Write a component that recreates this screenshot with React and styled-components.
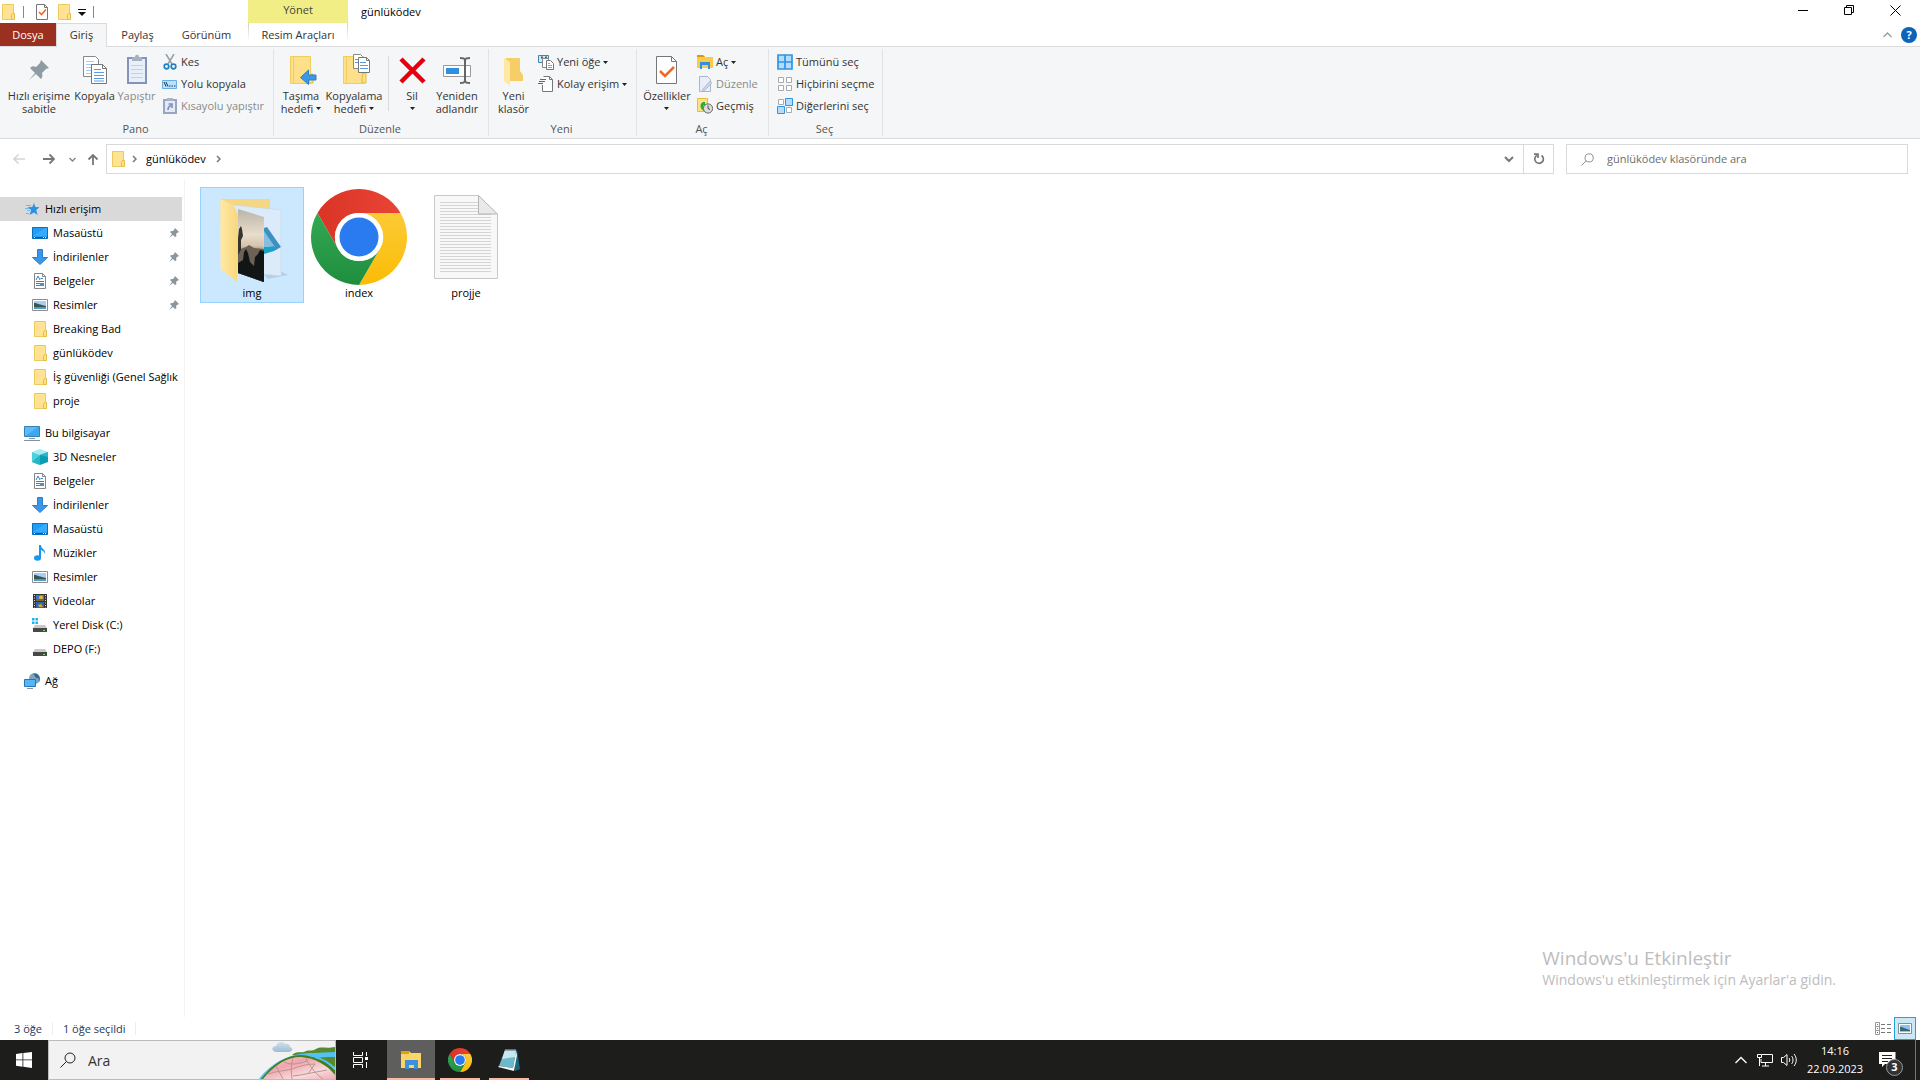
import React from "react";
import styled, { createGlobalStyle, css } from "styled-components";

const quickAccess = [
	{ label: "Masaüstü", icon: "desktop", pinned: true },
	{ label: "İndirilenler", icon: "download", pinned: true },
	{ label: "Belgeler", icon: "document", pinned: true },
	{ label: "Resimler", icon: "picture", pinned: true },
	{ label: "Breaking Bad", icon: "folder" },
	{ label: "günlüködev", icon: "folder" },
	{ label: "İş güvenliği (Genel Sağlık", icon: "folder" },
	{ label: "proje", icon: "folder" },
];

const thisComputer = [
	{ label: "3D Nesneler", icon: "cube" },
	{ label: "Belgeler", icon: "document" },
	{ label: "İndirilenler", icon: "download" },
	{ label: "Masaüstü", icon: "desktop" },
	{ label: "Müzikler", icon: "music" },
	{ label: "Resimler", icon: "picture" },
	{ label: "Videolar", icon: "video" },
	{ label: "Yerel Disk (C:)", icon: "systemDisk" },
	{ label: "DEPO (F:)", icon: "disk" },
];

const smallIcons = {
	folder: (
		<>
			<path d="M2.500.5h11v15h-11z" fill="#ffe292" stroke="#ecc95c" />
			<path d="M12.500 9.500h2v6h-3v-4z" fill="#ffe292" stroke="#e5bd45" />
		</>
	),
	desktop: (
		<>
			<path d="M.5 2.500h15v11H.5z" fill="#1e9dfb" stroke="#0f6db5" />
			<path d="M1 11 13 3h2v8z" fill="#39abfd" />
			<path d="M1 12.500h14" stroke="#0b5c9c" />
			<path d="M2 12.500h1M11 12.500h1M13 12.500h1" stroke="#fff" />
		</>
	),
	download: <path d="M5.500.5h5v8h5L8 15.500.5 8.500h5z" fill="#3a96e8" stroke="#2b7fcb" />,
	document: (
		<>
			<path d="M2.500.5h8l3 3v12h-11z" fill="#fff" stroke="#858585" />
			<path d="M10.500.5v3h3" fill="none" stroke="#858585" />
			<path d="m4 7 2-4 2 4M8.500 5.500H11M4 8.500h8M4 10.500h4M4 12.500h4" fill="none" stroke="#3a7fb8" />
			<path d="M8 10h4v3H8z" fill="#4f91c6" />
		</>
	),
	picture: (
		<>
			<path d="M.5 2.500h15v11H.5z" fill="#fff" stroke="#8c8c8c" />
			<path d="M2 4h12v8H2z" fill="#a6cdf2" />
			<path d="M2 6c3 0 6 2 12 3v1H2z" fill="#33584f" />
			<path d="M2 10h12v2H2z" fill="#5b94cd" />
		</>
	),
	star: (
		<>
			<path d="m10 2 1.300 4 4.200.300-3.300 2.700 1.400 5L10 11.400 5.500 14l1.700-5L3.500 6.300l4.800-.3z" fill="#2a90e2" />
			<path d="M2 4.500h5M1 7.500h4M3 9.500h3M2 12.500h3" stroke="#6dbaf0" />
		</>
	),
	computer: (
		<>
			<path d="M.5 1.500h15v10H.5z" fill="#5dbcf8" stroke="#347fb3" />
			<path d="M1 11 14 2h1v9z" fill="#3ea7f0" />
			<path d="M5 13.500h6M0 15.500h16" stroke="#8295a5" />
		</>
	),
	cube: (
		<>
			<path d="m8 0 8 3-8 3-8-3z" fill="#a5edf2" />
			<path d="m0 3 8 3v10l-8-3z" fill="#4ed1dc" />
			<path d="m16 3-8 3v10l8-3z" fill="#0b9eb3" />
			<path d="m8 6 8-3v5z" fill="#28b8ca" />
			<path d="m0 13 8-7v10z" fill="#25b5c5" />
		</>
	),
	music: (
		<>
			<path d="M7 0h2c0 4 5 4 4 9-1-3-2-3-4-4v8H7z" fill="#1897ef" />
			<ellipse cx="5.500" cy="13" rx="3.500" ry="2.700" fill="#1897ef" />
		</>
	),
	video: (
		<>
			<path d="M1 1h14v14H1z" fill="#343434" />
			<path d="M4 2h8v6H4z" fill="#3c79cd" />
			<path d="M4 9h8v6H4z" fill="#3264b2" />
			<circle cx="9" cy="4.500" r="2" fill="#e8b52b" />
			<path d="M4 6h8v2H4z" fill="#7b6a22" />
			<path d="m6 12 3-1 2 3H7z" fill="#d7a624" />
			<path d="M2.500 2v13M13.500 2v13" stroke="#ddd" strokeDasharray="1 1.500" />
		</>
	),
	disk: (
		<>
			<path d="M3 8h10l2 3v4H1v-4z" fill="#c9c9c9" />
			<path d="M1 11h14v4H1z" fill="#484848" />
			<path d="M11 13.500h2" stroke="#5af36c" />
		</>
	),
	systemDisk: (
		<>
			<path d="M3 8h10l2 3v4H1v-4z" fill="#c9c9c9" />
			<path d="M1 11h14v4H1z" fill="#484848" />
			<path d="M11 13.500h2" stroke="#5af36c" />
			<path d="M0 1h2.500v2.500H0zM3.500 1H6v2.500H3.500zM0 4.500h2.500V7H0zM3.500 4.500H6V7H3.500z" fill="#1bb1f2" />
		</>
	),
	network: (
		<>
			<circle cx="10.500" cy="5.500" r="5.500" fill="#7aa6c4" />
			<path d="M8 1c4 0 2 4 5 4s1 3 2 4c2-4 0-7-3-8.500z" fill="#35698c" />
			<path d="M.5 6.500h11v7H.5z" fill="#53b6f5" stroke="#2675ae" />
			<path d="M3 15.500h6" stroke="#8295a5" />
		</>
	),
	properties: (
		<>
			<path d="M2.500.5h8l3 3v12h-11z" fill="#fff" stroke="#777" />
			<path d="M10.500.5v3h3" fill="none" stroke="#777" />
			<path d="m5 8 2.500 2.500L12 5.500" fill="none" stroke="#f26522" strokeWidth="1.600" />
		</>
	),
	cut: (
		<>
			<path d="m4 0 6 10M12 0 6 10" fill="none" stroke="#9aa3ab" strokeWidth="1.600" />
			<circle cx="4.500" cy="12.500" r="2.300" fill="none" stroke="#1f82c4" strokeWidth="1.700" />
			<circle cx="11.500" cy="12.500" r="2.300" fill="none" stroke="#1f82c4" strokeWidth="1.700" />
		</>
	),
	path: (
		<>
			<path d="M.5 4.500h14v8H.5z" fill="#b8e1fc" stroke="#68aee0" />
			<path d="m2 6 2 4.500m0-4.500 2 4.500M7 10h1.500M9.500 10H11M12 10h1.500" stroke="#143c5c" />
		</>
	),
	shortcut: (
		<>
			<path d="M2 2h12v13H2z" fill="#e3eaf6" stroke="#98a6c4" strokeWidth="2" />
			<path d="M5 0h6v3H5z" fill="#a9b4cb" />
			<path d="M6 12c0-3 1-4 3-4.500M6.500 6H10v4" fill="none" stroke="#7f90b6" strokeWidth="1.600" />
		</>
	),
	newItem: (
		<>
			<path d="M.5 1.500h10v7H.5z" fill="#cce9fb" stroke="#4583ae" />
			<path d="M3 3.500h2M7 3.500h2" stroke="#35627f" strokeWidth="2" />
			<path d="M4.500 4.500h6v9h-6z" fill="#fff" stroke="#888" />
			<path d="M8.500 6.500h4l3 3v6h-7z" fill="#fff" stroke="#777" />
			<path d="M10 9.500h2M10 11.500h4M10 13.500h4" stroke="#c58e98" />
		</>
	),
	easyAccess: (
		<>
			<path d="M4.500.5h7l3 3v12h-10z" fill="#fff" />
			<path d="M4.500 9v6.500h10v-12l-3-3h-6M11.500.5v3h3" fill="none" stroke="#777" />
			<path d="M2 3.500h6M1 5.500h6M0 7.500h5" stroke="#2376bd" />
		</>
	),
	open: (
		<>
			<path d="M0 1h6l2 2h8v11H0z" fill="#fcca4b" />
			<path d="M0 1h6l2 2H0z" fill="#d99a08" />
			<path d="M3 8h10v7h-2v-4H5v4H3z" fill="#358fdf" />
		</>
	),
	edit: (
		<>
			<path d="M2.500.5h8l3 3v12h-11z" fill="#e9eef8" stroke="#a9b4cc" />
			<path d="m5 14 8-9 2 2-8 8z" fill="#c9d3e6" stroke="#a9b4cc" strokeWidth=".7" />
		</>
	),
	history: (
		<>
			<path d="M.5.5h10v13H.5z" fill="#ffe085" stroke="#e7bc3b" />
			<circle cx="11" cy="10.500" r="4.600" fill="#ddd" stroke="#666" />
			<path d="M11 7.500v3l2 1" fill="none" stroke="#444" />
			<path d="M8 4v3c-3 0-2 5 0 6-5-1-6-7-2-9z" fill="#2bad35" />
		</>
	),
	selectAll: (
		<>
			<path d="M1 1h14v14H1z" fill="#b5ddfb" />
			<path d="M1 1h14v14H1zM8 1v14M1 8h14" fill="none" stroke="#2f94e4" strokeWidth="1.700" />
		</>
	),
	selectNone: <path d="M1.500 1.500h5v5h-5zM9.500 1.500h5v5h-5zM1.500 9.500h5v5h-5zM9.500 9.500h5v5h-5z" fill="#fff" stroke="#aaa" />,
	selectInvert: (
		<>
			<path d="M1.500 1.500h5v5h-5zM9.500 9.500h5v5h-5z" fill="#fff" stroke="#aaa" />
			<path d="M8.500.5h7v7h-7zM.5 8.500h7v7h-7z" fill="#b5ddfb" stroke="#2f94e4" />
		</>
	),
};

const bigIcons = {
	pin: (
		<path d="m18 6 8 8-3 1-4 4c1 3 0 5-1 6l-5-5-7 6 6-7-5-5c2-2 4-2 6-1l4-4z" fill="#8f9ba3" />
	),
	copy: (
		<>
			<path d="M4.500 2.500h12l3 3v17h-15z" fill="#fff" stroke="#888" />
			<path d="M7 7.500h8M7 10.500h10M7 13.500h10M7 16.500h10M7 19.500h10" stroke="#a8c9f2" />
			<path d="M12.500 10.500h11l4 4v15h-15z" fill="#fff" stroke="#777" />
			<path d="M23.500 10.500v4h4" fill="none" stroke="#777" />
			<path d="M15 15.500h7M15 18.500h10M15 21.500h10M15 24.500h10M15 27h10" stroke="#5a9be8" />
		</>
	),
	paste: (
		<>
			<path d="M7 4h18v25H7z" fill="#e9eff9" stroke="#8494b8" strokeWidth="2" />
			<path d="M11 3h3c0-3 4-3 4 0h3v4H11z" fill="#a7b0c0" />
			<path d="M10 11.500h12M10 15.500h12M10 19.500h12M10 23.500h12" stroke="#c3d1ea" />
		</>
	),
	moveTo: (
		<>
			<path d="M5.500 2.500h20v27h-20z" fill="#ffe08a" stroke="#f0cd5f" />
			<path d="M8.500 3v26" stroke="#f0cd5f" />
			<path d="M26 20h2v9h-4v-5z" fill="#ffe08a" stroke="#e3b93c" />
			<path d="m15.500 23.500 8-7.500v5h7.500v5h-7.500v4.500z" fill="#3b98e8" stroke="#2c80cb" />
		</>
	),
	copyTo: (
		<>
			<path d="M5.500 2.500h20v27h-20z" fill="#ffe08a" stroke="#f0cd5f" />
			<path d="M8.500 3v26" stroke="#f0cd5f" />
			<path d="M25 19h3v10h-4v-5z" fill="#ffe08a" stroke="#e3b93c" />
			<path d="M15.500.5h7l2 2v12h-9z" fill="#fff" stroke="#888" />
			<path d="M20.500 3.500h8l3 3v12h-11z" fill="#fff" stroke="#777" />
			<path d="M28.500 3.500v3h3" fill="none" stroke="#777" />
			<path d="M22 8.500h6M22 11.500h8M22 14.500h8M17 5.500h3M17 8.500h3" stroke="#5a9be8" />
		</>
	),
	remove: <path d="m5 5 23 23M28 5 5 28" stroke="#e3000f" strokeWidth="4.500" />,
	rename: (
		<>
			<path d="M2.500 11.500h27v11h-27z" fill="#fff" stroke="#999" />
			<path d="M5 14h13v6H5z" fill="#2f90e2" />
			<path d="M19 4c3 0 5 0 5 3 0-3 2-3 5-3M24 5v22M19 29c3 0 5 0 5-3 0 3 2 3 5 3" fill="none" stroke="#666" strokeWidth="2" />
		</>
	),
	newFolder: (
		<>
			<path d="M8 4h14v13l3 4v6H8z" fill="#f5ce67" />
			<path d="m6 4 6 4v24l-6-5z" fill="#ffe7a4" />
		</>
	),
	properties: (
		<>
			<path d="M5.500 2.500h15l5 5v22h-20z" fill="#fff" stroke="#777" />
			<path d="M20.500 2.500v5h5" fill="none" stroke="#777" />
			<path d="m9 17 5 5 9-9" fill="none" stroke="#f26522" strokeWidth="2.500" />
		</>
	),
};

const Icon = ({ name, size = 16 }) => (
	<svg width={size} height={size} viewBox={`0 0 ${size} ${size}`} aria-hidden="true">
		{size === 32 ? bigIcons[name] : smallIcons[name]}
	</svg>
);

const Caret = () => (
	<svg width="5" height="3" viewBox="0 0 5 3" aria-hidden="true">
		<path d="M0 0h5L2.500 3z" fill="#222" />
	</svg>
);

const Crumb = () => (
	<svg width="5" height="8" viewBox="0 0 5 8" aria-hidden="true">
		<path d="m1 1 3 3-3 3" fill="none" stroke="#777" strokeWidth="1.500" />
	</svg>
);

const Pin = () => (
	<svg width="12" height="12" viewBox="0 0 12 12" aria-hidden="true">
		<path d="m7 1 4 4-2 1-1 1c1 2 0 3-1 3L5 8l-4 3 3-4-2-2c0-1 2-1 3-1l1-1z" fill="#8a969e" />
	</svg>
);

const ChromeIcon = ({ size }) => (
	<svg width={size} height={size} viewBox="0 0 96 96" aria-hidden="true">
		<defs>
			<linearGradient id="chromeRed" x1="0" x2="1">
				<stop offset="0" stopColor="#da3427" />
				<stop offset="1" stopColor="#ea4435" />
			</linearGradient>
			<linearGradient id="chromeYellow" x1="0" y1="0" x2="0" y2="1">
				<stop offset="0" stopColor="#fcca35" />
				<stop offset="1" stopColor="#fbbc06" />
			</linearGradient>
			<linearGradient id="chromeGreen" x1="0" y1="0" x2="0" y2="1">
				<stop offset="0" stopColor="#34a853" />
				<stop offset="1" stopColor="#1e8e3e" />
			</linearGradient>
		</defs>
		<path d="M6.430 24A48 48 0 0 1 89.570 24H48A24 24 0 0 0 27.200 60z" fill="url(#chromeRed)" />
		<path d="M89.570 24A48 48 0 0 1 48 96l20.800-36A24 24 0 0 0 48 24z" fill="url(#chromeYellow)" />
		<path d="M48 96A48 48 0 0 1 6.430 24l20.800 36a24 24 0 0 0 41.600 0z" fill="url(#chromeGreen)" />
		<circle cx="48" cy="48" r="24" fill="#fff" />
		<circle cx="48" cy="48" r="19.500" fill="#2b7bf0" />
	</svg>
);

const PhotoFolderIcon = () => (
	<svg width="96" height="96" viewBox="0 0 96 96" aria-hidden="true">
		<defs>
			<linearGradient id="photoSky" x1="0" y1="0" x2="0" y2="1">
				<stop offset="0" stopColor="#b9b4a8" />
				<stop offset=".35" stopColor="#e9ddcb" />
				<stop offset=".5" stopColor="#d8c5ac" />
				<stop offset=".6" stopColor="#82796c" />
				<stop offset="1" stopColor="#17191a" />
			</linearGradient>
			<linearGradient id="folderFront">
				<stop offset="0" stopColor="#ffe9a6" />
				<stop offset="1" stopColor="#f8d77c" />
			</linearGradient>
		</defs>
		<path d="m60 86 18-3 6 3-20 4z" fill="#9fb8cc" opacity=".5" />
		<path d="M16.500 10H66v64H17z" fill="#f5d682" />
		<path d="m29 16 48 5v66l-17-2z" fill="#dcebfa" stroke="#c3d6e8" strokeWidth=".6" />
		<path d="m60 39 3-1 14 20-7 4-10 1z" fill="#3d8fc4" />
		<path d="m60 42 11 16h-11z" fill="#85bede" />
		<path d="m60 59 10-2v5l-10 3z" fill="#16a3c5" />
		<path d="m34 20 26 8-.500 65L34 84z" fill="url(#photoSky)" />
		<path d="m34 61 8-3 3-2 5 3 10 1v33l-26-9z" fill="#6b6255" />
		<path d="m34 49 1-9 2-3 1 3 1 7-2 4v10l-3 5z" fill="#35352f" />
		<path d="m34 74 5-3 1-8 2-3 2 4 2 9 4 4 1-9 3-3 2-4 4 1v31l-26-9z" fill="#121516" />
		<path d="m16.500 10 12.500 6 5 10-1 67-16.500-13z" fill="url(#folderFront)" />
	</svg>
);

const TextFileIcon = () => (
	<svg width="96" height="96" viewBox="0 0 96 96" aria-hidden="true">
		<path d="M16.500 6.500h44l19 19v64h-63z" fill="#f8f8f8" stroke="#c8c8c8" />
		{Array.from({ length: 24 }, (_, i) => (
			<path key={i} d={`M22 ${13.5 + i * 3}h${i < 4 ? 38 : 51}`} stroke="#d4d4d4" />
		))}
		<path d="M60.500 6.500v18.500h19z" fill="#e9e9e9" stroke="#b5b5b5" />
	</svg>
);

const ExplorerIcon = () => (
	<svg width="22" height="20" viewBox="0 0 22 20" aria-hidden="true">
		<path d="M1 1h8l2 2h10v15H1z" fill="#fdd467" />
		<path d="M1 1h8v3H1z" fill="#e3a008" />
		<path d="M5 10h13v9h-4v-4H9v4H5z" fill="#3c91dc" />
	</svg>
);

const NotepadIcon = () => (
	<svg width="24" height="24" viewBox="0 0 24 24" aria-hidden="true">
		<path d="m17 3 3-1 3 19-5 2z" fill="#16687c" />
		<path d="M8 2h11l-3 18-14-2z" fill="#6bb9c9" />
		<path d="M8 2h11l-1 7L5 11z" fill="#c6e8ee" />
		<path d="m16 20-14-2-1 1 16 4 3-16-1-4z" fill="#f1f6f7" />
		<path d="M8 2h11" stroke="#808b90" strokeWidth="1.500" />
	</svg>
);

const SearchIcon = ({ size, color }) => (
	<svg width={size} height={size} viewBox="0 0 16 16" fill="none" stroke={color} aria-hidden="true">
		<circle cx="10" cy="6" r="5" />
		<path d="M6.500 9.500.5 15.500" />
	</svg>
);

const PicnicArt = () => (
	<svg width="76" height="38" viewBox="0 0 76 38" aria-hidden="true">
		<defs>
			<linearGradient id="cloud" x1="0" y1="0" x2="0" y2="1">
				<stop offset="0" stopColor="#cfe2ee" />
				<stop offset="1" stopColor="#9dbdd3" />
			</linearGradient>
			<linearGradient id="cloth" x2=".35" y2=".35" spreadMethod="reflect">
				<stop offset="0" stopColor="#f8dcdd" />
				<stop offset="1" stopColor="#eea4ad" />
			</linearGradient>
		</defs>
		<path d="M18 11c-6 0-6-6-1-6 1-5 8-5 9-2 4-1 5 2 5 3 4 1 2 5-1 5z" fill="url(#cloud)" />
		<path d="M33 14c4-4 9-2 12-3 4-3 8 0 12-3 5-3 10 0 19-2v20z" fill="#568a2c" />
		<path d="M0 38C12 22 30 12 54 12c8 0 14-1 22-1v5c-8 0-12 0-18 1-24-3-38 4-55 21z" fill="#54c1f2" />
		<path d="M2 38C14 22 28 14 42 14c14 1 26 7 34 15v9z" fill="#427e22" />
		<path d="M4 38C15 24 28 16 42 16c14 1 26 8 34 18v4z" fill="url(#cloth)" />
		<path d="m17 25 7 13M34 17c-2 6-2 13-1 21M47 17c3 8 9 15 17 21M9 33c9-3 16-3 24-5 8-3 14-5 23-5M24 20c5 4 14 4 24 0M34 35c10-1 22-4 34-6M56 23l-7 10" fill="none" stroke="#bd948d" />
		<path d="M56 16c8 3 14 5 20 12" fill="none" stroke="#54c1f2" strokeWidth="2" />
	</svg>
);

const BigTool = ({ icon, lines, width, caret, disabled }) => (
	<BigButton $width={width} disabled={disabled}>
		<Icon name={icon} size={32} />
		<BigLabel>
			<span>{lines[0]}</span>
			<span>
				{lines[1]}
				{caret && <Caret />}
			</span>
		</BigLabel>
	</BigButton>
);

const SmallTool = ({ icon, label, caret, disabled }) => (
	<SmallButton disabled={disabled}>
		<Icon name={icon} />
		<SmallLabel>{label}</SmallLabel>
		{caret && <Caret />}
	</SmallButton>
);

const NavRow = ({ label, icon, pinned, root, active }) => (
	<NavItem $root={root} $active={active}>
		<Icon name={icon} />
		<NavText>{label}</NavText>
		{pinned && <Pin />}
	</NavItem>
);

const App = () => {
	return (
		<>
			<GlobalStyle />
			<Desktop>
				<TitleBar>
					<QuickBar>
						<Icon name="folder" />
						<QuickDivider />
						<PlainButton aria-label="Özellikler">
							<Icon name="properties" />
						</PlainButton>
						<PlainButton aria-label="Yeni klasör">
							<Icon name="folder" />
						</PlainButton>
						<PlainButton aria-label="Araç çubuğunu özelleştir">
							<svg width="8" height="8" viewBox="0 0 8 8">
								<path d="M0 1.500h8" stroke="#111" />
								<path d="M0 4h8L4 8z" fill="#111" />
							</svg>
						</PlainButton>
						<QuickDivider />
					</QuickBar>
					<ManageTab>Yönet</ManageTab>
					<WindowTitle>günlüködev</WindowTitle>
					<WindowButton aria-label="Simge durumuna küçült">
						<svg width="11" height="11" viewBox="0 0 11 11">
							<path d="M0 5.500h10" stroke="#000" />
						</svg>
					</WindowButton>
					<WindowButton aria-label="Önceki boyut">
						<svg width="11" height="11" viewBox="0 0 11 11" fill="none" stroke="#000">
							<path d="M.5 2.500h7v7h-7zM2.500 2.500v-2h7v7h-2" />
						</svg>
					</WindowButton>
					<WindowButton aria-label="Kapat">
						<svg width="11" height="11" viewBox="0 0 11 11">
							<path d="m.5.5 10 10M10.500.5l-10 10" stroke="#000" />
						</svg>
					</WindowButton>
				</TitleBar>

				<TabRow>
					<FileTab>Dosya</FileTab>
					<Tab $width={51} $active>
						Giriş
					</Tab>
					<Tab $width={61}>Paylaş</Tab>
					<Tab $width={77}>Görünüm</Tab>
					<ToolsTab>Resim Araçları</ToolsTab>
					<TabTools>
						<PlainButton aria-label="Şeridi küçült">
							<svg width="9" height="6" viewBox="0 0 9 6">
								<path d="m.5 5 4-4 4 4" fill="none" stroke="#9a9a9a" strokeWidth="1.300" />
							</svg>
						</PlainButton>
						<HelpButton aria-label="Yardım">?</HelpButton>
					</TabTools>
				</TabRow>

				<Ribbon>
					<Group $width={274}>
						<GroupBody>
							<BigTool icon="pin" lines={["Hızlı erişime", "sabitle"]} width={70} />
							<BigTool icon="copy" lines={["Kopyala"]} width={41} />
							<BigTool icon="paste" lines={["Yapıştır"]} width={43} disabled />
							<SmallColumn>
								<SmallTool icon="cut" label="Kes" />
								<SmallTool icon="path" label="Yolu kopyala" />
								<SmallTool icon="shortcut" label="Kısayolu yapıştır" disabled />
							</SmallColumn>
						</GroupBody>
						<GroupLabel>Pano</GroupLabel>
					</Group>
					<Group $width={215}>
						<GroupBody>
							<BigTool icon="moveTo" lines={["Taşıma", "hedefi"]} width={46} caret />
							<BigTool icon="copyTo" lines={["Kopyalama", "hedefi"]} width={60} caret />
							<ToolDivider />
							<BigTool icon="remove" lines={["Sil", ""]} width={40} caret />
							<BigTool icon="rename" lines={["Yeniden", "adlandır"]} width={50} />
						</GroupBody>
						<GroupLabel>Düzenle</GroupLabel>
					</Group>
					<Group $width={148}>
						<GroupBody>
							<BigTool icon="newFolder" lines={["Yeni", "klasör"]} width={41} />
							<SmallColumn>
								<SmallTool icon="newItem" label="Yeni öğe" caret />
								<SmallTool icon="easyAccess" label="Kolay erişim" caret />
							</SmallColumn>
						</GroupBody>
						<GroupLabel>Yeni</GroupLabel>
					</Group>
					<Group $width={132}>
						<GroupBody>
							<BigTool icon="properties" lines={["Özellikler", ""]} width={52} caret />
							<SmallColumn>
								<SmallTool icon="open" label="Aç" caret />
								<SmallTool icon="edit" label="Düzenle" disabled />
								<SmallTool icon="history" label="Geçmiş" />
							</SmallColumn>
						</GroupBody>
						<GroupLabel>Aç</GroupLabel>
					</Group>
					<Group $width={114}>
						<GroupBody>
							<SmallColumn>
								<SmallTool icon="selectAll" label="Tümünü seç" />
								<SmallTool icon="selectNone" label="Hiçbirini seçme" />
								<SmallTool icon="selectInvert" label="Diğerlerini seç" />
							</SmallColumn>
						</GroupBody>
						<GroupLabel>Seç</GroupLabel>
					</Group>
				</Ribbon>

				<AddressRow>
					<HistoryButtons>
						<PlainButton aria-label="Geri" disabled>
							<svg width="14" height="12" viewBox="0 0 14 12">
								<path d="M13 6H2M6.500 1.500 2 6l4.500 4.500" fill="none" stroke="#d5d5d5" strokeWidth="1.600" />
							</svg>
						</PlainButton>
						<PlainButton aria-label="İleri">
							<svg width="14" height="12" viewBox="0 0 14 12">
								<path d="M1 6h11M7.500 1.500 12 6l-4.500 4.500" fill="none" stroke="#777" strokeWidth="1.800" />
							</svg>
						</PlainButton>
						<PlainButton aria-label="Son konumlar">
							<svg width="7" height="5" viewBox="0 0 7 5">
								<path d="m.5 1 3 3 3-3" fill="none" stroke="#888" strokeWidth="1.500" />
							</svg>
						</PlainButton>
						<PlainButton aria-label="Yukarı">
							<svg width="12" height="13" viewBox="0 0 12 13">
								<path d="M6 12V2M1.500 6.500 6 2l4.500 4.500" fill="none" stroke="#777" strokeWidth="1.800" />
							</svg>
						</PlainButton>
					</HistoryButtons>
					<AddressBox>
						<Icon name="folder" />
						<Crumb />
						<CrumbButton>günlüködev</CrumbButton>
						<Crumb />
						<AddressEnd>
							<PlainButton aria-label="Önceki konumlar">
								<svg width="10" height="7" viewBox="0 0 10 7">
									<path d="m1 1 4 4 4-4" fill="none" stroke="#777" strokeWidth="2" />
								</svg>
							</PlainButton>
						</AddressEnd>
						<RefreshButton aria-label="Yenile">
							<svg width="12" height="12" viewBox="0 0 12 12">
								<path d="M8.500 2.500a4.300 4.300 0 1 1-4.700-.1M1 1.200h4V5" fill="none" stroke="#777" strokeWidth="1.700" />
							</svg>
						</RefreshButton>
					</AddressBox>
					<SearchBox>
						<SearchIcon size={13} color="#777" />
						<SearchInput aria-label="Klasörde ara" placeholder="günlüködev klasöründe ara" />
					</SearchBox>
				</AddressRow>

				<Content>
					<NavPane>
						<NavSection>
							<NavRow label="Hızlı erişim" icon="star" root active />
							{quickAccess.map((item) => (
								<NavRow key={item.label} {...item} />
							))}
						</NavSection>
						<NavSection>
							<NavRow label="Bu bilgisayar" icon="computer" root />
							{thisComputer.map((item) => (
								<NavRow key={item.label} {...item} />
							))}
						</NavSection>
						<NavSection>
							<NavRow label="Ağ" icon="network" root />
						</NavSection>
					</NavPane>
					<Files>
						<FileItem $selected>
							<PhotoFolderIcon />
							img
						</FileItem>
						<FileItem>
							<ChromeIcon size={96} />
							index
						</FileItem>
						<FileItem>
							<TextFileIcon />
							projje
						</FileItem>
					</Files>
					<Watermark>
						<WatermarkTitle>Windows'u Etkinleştir</WatermarkTitle>
						<WatermarkText>Windows'u etkinleştirmek için Ayarlar'a gidin.</WatermarkText>
					</Watermark>
				</Content>

				<StatusBar>
					<StatusText>3 öğe</StatusText>
					<StatusText>1 öğe seçildi</StatusText>
					<ViewButtons>
						<ViewButton aria-label="Ayrıntılar">
							<svg width="16" height="13" viewBox="0 0 16 13">
								<path d="M.5.5h4v12h-4zM.5 4.500h4M.5 8.500h4" fill="none" stroke="#999" />
								<path d="M6 2.500h4M12 2.500h4M6 6.500h4M12 6.500h4M6 10.500h4M12 10.500h4" stroke="#777" />
								<path d="M2 2.500h1M2 6.500h1" stroke="#38c" />
								<path d="M2 10.500h1" stroke="#c33" />
							</svg>
						</ViewButton>
						<ViewButton aria-label="Büyük simgeler" $active>
							<svg width="14" height="11" viewBox="0 0 14 11">
								<path d="M.5.5h13v10H.5z" fill="#fff" stroke="#8c8c8c" />
								<path d="M2 2h10v7H2z" fill="#8cc3f5" />
								<path d="M2 4c4 0 5 2 10 3v1H2z" fill="#356a72" />
							</svg>
						</ViewButton>
					</ViewButtons>
				</StatusBar>

				<Taskbar>
					<TaskButton aria-label="Başlat">
						<svg width="16" height="16" viewBox="0 0 16 16" fill="#fff">
							<path d="m0 2 6.500-.900v6.400H0zM7.300 1 16 0v7.500H7.300zM0 8.300h6.500v6.400L0 13.800zM7.300 8.300H16V16l-8.700-1.200z" />
						</svg>
					</TaskButton>
					<TaskSearch>
						<SearchIcon size={16} color="#222" />
						<TaskInput aria-label="Ara" placeholder="Ara" />
						<PicnicArt />
					</TaskSearch>
					<TaskButton aria-label="Görev görünümü">
						<svg width="16" height="16" viewBox="0 0 16 16" fill="none" stroke="#fff">
							<path d="M1.500 0v3.500h9V0M1.500 5.500h9v5h-9zM1.500 16v-3.500h9V16M14.500 0v4M14.500 10v6" />
							<path d="M13 5h3v3h-3z" fill="#fff" stroke="none" />
						</svg>
					</TaskButton>
					<OpenTasks>
						<TaskButton aria-label="Dosya Gezgini" $open="full">
							<ExplorerIcon />
						</TaskButton>
						<TaskButton aria-label="Google Chrome" $open="part">
							<ChromeIcon size={24} />
						</TaskButton>
						<TaskButton aria-label="Not Defteri" $open="part">
							<NotepadIcon />
						</TaskButton>
					</OpenTasks>
					<Tray>
						<TrayButton aria-label="Gizli simgeleri göster">
							<svg width="12" height="8" viewBox="0 0 12 8">
								<path d="m.5 7 5.500-5.500L11.500 7" fill="none" stroke="#fff" strokeWidth="1.300" />
							</svg>
						</TrayButton>
						<TrayButton aria-label="Ağ">
							<svg width="16" height="14" viewBox="0 0 16 14" fill="none" stroke="#fff">
								<path d="M5 1.500h10.500v8H4V6M.5 1.500h4v3h-4zM2.500 5v8M8.500 10v3M5 13h7" />
							</svg>
						</TrayButton>
						<TrayButton aria-label="Ses">
							<svg width="17" height="14" viewBox="0 0 17 14" fill="none" stroke="#fff">
								<path d="M.5 4.500h2l3.500-3v11l-3.500-3h-2zM8 5c1 1 1 3 0 4M10.500 3c2 2 2 6 0 8M13 1c3 3.500 3 8.500 0 12" />
							</svg>
						</TrayButton>
						<Clock>
							<span>14:16</span>
							<span>22.09.2023</span>
						</Clock>
						<Notifications aria-label="Bildirimler">
							<svg width="17" height="16" viewBox="0 0 17 16">
								<path d="M0 0h16.500v12H6l-3 3v-3H0z" fill="#fff" />
								<path d="M3 3.500h10M3 6.500h10M3 9.500h6" stroke="#222" />
							</svg>
							<Badge>3</Badge>
						</Notifications>
						<ShowDesktop aria-label="Masaüstünü göster" />
					</Tray>
				</Taskbar>
			</Desktop>
		</>
	);
};

export default App;

const GlobalStyle = createGlobalStyle`
	* {
		box-sizing: border-box;
	}

	body {
		margin: 0;
		background: #fff;
		color: #111;
		font-family: "Open Sans", "Noto Sans", sans-serif;
		font-size: 11px;
		line-height: 13px;
	}

	button,
	input {
		margin: 0;
		padding: 0;
		border: 0;
		background: none;
		color: inherit;
		font: inherit;
	}

	svg {
		display: block;
		flex-shrink: 0;
	}
`;

const Desktop = styled.div`
	min-height: 100vh;
	display: flex;
	flex-direction: column;
`;

const PlainButton = styled.button`
	display: flex;
	align-items: center;
`;

const TitleBar = styled.header`
	display: flex;
	height: 23px;
`;

const QuickBar = styled.div`
	width: 248px;
	display: flex;
	align-items: center;
	gap: 6px;
`;

const QuickDivider = styled.span`
	width: 1px;
	height: 12px;
	margin: 0 4px 0 1px;
	background: #888;
`;

const ManageTab = styled.div`
	width: 100px;
	padding-top: 3px;
	background: #f0ee84;
	color: #444;
	text-align: center;
`;

const WindowTitle = styled.div`
	flex: 1;
	padding: 5px 13px;
	color: #000;
`;

const WindowButton = styled.button`
	width: 46px;
	height: 20px;
	display: flex;
	align-items: center;
	justify-content: center;

	&:last-child {
		margin-right: 2px;
	}
`;

const TabRow = styled.nav`
	display: flex;
	height: 23px;
	align-items: stretch;
`;

const FileTab = styled.button`
	width: 56px;
	padding-bottom: 1px;
	background: #9b3020;
	color: #fff;
`;

const Tab = styled.button`
	width: ${({ $width }) => $width}px;
	padding-bottom: 2px;
	color: #333;
	border: 1px solid transparent;
	border-bottom: 0;

	${({ $active }) =>
		$active &&
		css`
			position: relative;
			margin-bottom: -1px;
			background: #f5f6f7;
			border-color: #dadbdc;
		`}
`;

const ToolsTab = styled.button`
	width: 100px;
	margin-left: 3px;
	padding-bottom: 1px;
	color: #333;
	border: 0 solid;
	border-width: 0 1px;
	border-image: linear-gradient(#ccc, #fff 80%) 1;
`;

const TabTools = styled.div`
	flex: 1;
	display: flex;
	align-items: center;
	justify-content: flex-end;
	gap: 9px;
	padding-right: 3px;
`;

const HelpButton = styled.button`
	width: 16px;
	height: 16px;
	border-radius: 50%;
	background: #0c63b8;
	color: #fff;
	font-weight: 700;
`;

const Ribbon = styled.section`
	display: flex;
	height: 93px;
	padding: 2px 0;
	background: #f5f6f7;
	border-top: 1px solid #dadbdc;
	border-bottom: 1px solid #dadbdc;
`;

const Group = styled.div`
	width: ${({ $width }) => $width}px;
	display: flex;
	flex-direction: column;
	justify-content: space-between;
	padding-top: 2px;
	border-right: 1px solid #e2e3e4;
`;

const GroupBody = styled.div`
	display: flex;
	padding-left: 4px;
	white-space: nowrap;
`;

const GroupLabel = styled.div`
	padding-right: 2px;
	color: #555;
	line-height: 15px;
	text-align: center;
`;

const BigButton = styled.button`
	width: ${({ $width }) => $width}px;
	display: flex;
	flex-direction: column;
	align-items: center;
	gap: 3px;
	padding-top: 3px;
	color: ${({ disabled }) => (disabled ? "#8a8a8a" : "#333")};
`;

const BigLabel = styled.span`
	display: flex;
	flex-direction: column;
	align-items: center;

	span {
		height: 13px;
		display: flex;
		align-items: center;
		gap: 3px;
	}
`;

const SmallColumn = styled.div`
	display: flex;
	flex-direction: column;
`;

const SmallButton = styled.button`
	height: 22px;
	display: flex;
	align-items: center;
	gap: 3px;
	padding: 0 4px;
	color: ${({ disabled }) => (disabled ? "#8a8a8a" : "#333")};
`;

const SmallLabel = styled.span`
	padding-bottom: 2px;
`;

const ToolDivider = styled.div`
	width: 1px;
	height: 55px;
	margin: 5px 3px 0 4px;
	background: #dadbdc;
`;

const AddressRow = styled.div`
	display: flex;
	height: 41px;
	padding: 5px 12px 6px 0;
`;

const HistoryButtons = styled.div`
	display: grid;
	grid-template-columns: 30px 27px 18px 19px;
	align-items: center;
	padding-left: 12px;
`;

const AddressBox = styled.div`
	flex: 1;
	display: flex;
	align-items: center;
	gap: 6px;
	padding-left: 3px;
	border: 1px solid #d9d9d9;
	color: #000;
`;

const CrumbButton = styled(PlainButton)`
	padding: 0 4px 2px 3px;
`;

const AddressEnd = styled.div`
	flex: 1;
	display: flex;
	justify-content: flex-end;
	padding-right: 3px;
`;

const RefreshButton = styled.button`
	width: 30px;
	height: 28px;
	display: flex;
	align-items: center;
	justify-content: center;
	border-left: 1px solid #d9d9d9;
`;

const SearchBox = styled.label`
	width: 342px;
	display: flex;
	align-items: center;
	gap: 13px;
	margin-left: 12px;
	padding-left: 14px;
	border: 1px solid #d9d9d9;
`;

const SearchInput = styled.input`
	flex: 1;
	padding-bottom: 1px;
	outline: 0;

	&::placeholder {
		color: #6d6d6d;
		opacity: 1;
	}
`;

const Content = styled.main`
	flex: 1;
	display: flex;
	position: relative;
`;

const NavPane = styled.nav`
	width: 185px;
	display: flex;
	flex-direction: column;
	gap: 8px;
	padding: 17px 2px 0 0;
	border-right: 1px solid #f3f3f3;
`;

const NavSection = styled.div`
	display: flex;
	flex-direction: column;
`;

const NavItem = styled.button`
	height: 24px;
	display: flex;
	align-items: center;
	gap: 5px;
	padding-left: ${({ $root }) => ($root ? 24 : 32)}px;
	padding-right: 2px;
	background: ${({ $active }) => ($active ? "#d9d9d9" : "transparent")};
	color: #000;
	text-align: left;
	overflow: hidden;
`;

const NavText = styled.span`
	flex: 1;
	padding-bottom: 2px;
	white-space: nowrap;
`;

const Files = styled.div`
	flex: 1;
	display: flex;
	align-items: flex-start;
	gap: 3px;
	padding: 7px 15px;
`;

const FileItem = styled.button`
	width: 104px;
	height: 116px;
	display: flex;
	flex-direction: column;
	align-items: center;
	gap: 1px;
	padding-top: 1px;
	border: 1px solid ${({ $selected }) => ($selected ? "#99d1ff" : "transparent")};
	background: ${({ $selected }) => ($selected ? "#cce8ff" : "transparent")};
	color: #000;
`;

const Watermark = styled.div`
	position: absolute;
	right: 84px;
	bottom: 27px;
	color: #bdbdbd;
`;

const WatermarkTitle = styled.div`
	font-size: 19px;
	line-height: 24px;
`;

const WatermarkText = styled.div`
	font-size: 14px;
	line-height: 20px;
`;

const StatusBar = styled.footer`
	height: 23px;
	display: flex;
	align-items: center;
	padding-left: 4px;
	color: #1e395b;
`;

const StatusText = styled.span`
	padding: 0 10px;
	border-right: 1px solid #eee;
`;

const ViewButtons = styled.div`
	flex: 1;
	display: flex;
	justify-content: flex-end;
	padding-right: 4px;
`;

const ViewButton = styled.button`
	width: 22px;
	height: 23px;
	display: flex;
	align-items: center;
	justify-content: center;
	border: 1px solid ${({ $active }) => ($active ? "#26a0da" : "transparent")};
	background: ${({ $active }) => ($active ? "#cbe8f6" : "transparent")};
`;

const Taskbar = styled.footer`
	height: 40px;
	display: flex;
	background: #1d1d1c;
	color: #fff;
`;

const TaskButton = styled.button`
	width: 48px;
	height: 40px;
	display: flex;
	align-items: center;
	justify-content: center;
	background: ${({ $open }) => ($open === "full" ? "#5e5e5d" : "transparent")};

	${({ $open }) =>
		$open &&
		css`
			background-image: linear-gradient(#fbb9a3, #fbb9a3);
			background-repeat: no-repeat;
			background-position: center bottom;
			background-size: ${$open === "full" ? 48 : 40}px 2px;
		`}
`;

const OpenTasks = styled.div`
	display: flex;
	gap: 1px;
	margin-left: 3px;
`;

const TaskSearch = styled.label`
	width: 288px;
	display: flex;
	align-items: center;
	gap: 12px;
	padding-left: 11px;
	background: #f2f2f2;
	border: 1px solid #bbb;
`;

const TaskInput = styled.input`
	flex: 1;
	min-width: 0;
	outline: 0;
	font-size: 14px;

	&::placeholder {
		color: #333;
		opacity: 1;
	}
`;

const Tray = styled.div`
	flex: 1;
	display: flex;
	align-items: center;
	justify-content: flex-end;
`;

const TrayButton = styled.button`
	width: 24px;
	height: 40px;
	display: flex;
	align-items: center;
	justify-content: center;
`;

const Clock = styled.div`
	width: 68px;
	display: flex;
	flex-direction: column;
	align-items: center;
	line-height: 18px;
`;

const Notifications = styled.button`
	position: relative;
	width: 46px;
	height: 40px;
	padding-left: 10px;
`;

const Badge = styled.span`
	position: absolute;
	left: 17px;
	bottom: 4px;
	width: 17px;
	height: 17px;
	border: 1px solid #999;
	border-radius: 50%;
	background: #333;
	font-weight: 700;
	line-height: 14px;
	text-align: center;
`;

const ShowDesktop = styled.button`
	width: 5px;
	height: 40px;
	border-left: 1px solid #777;
`;
